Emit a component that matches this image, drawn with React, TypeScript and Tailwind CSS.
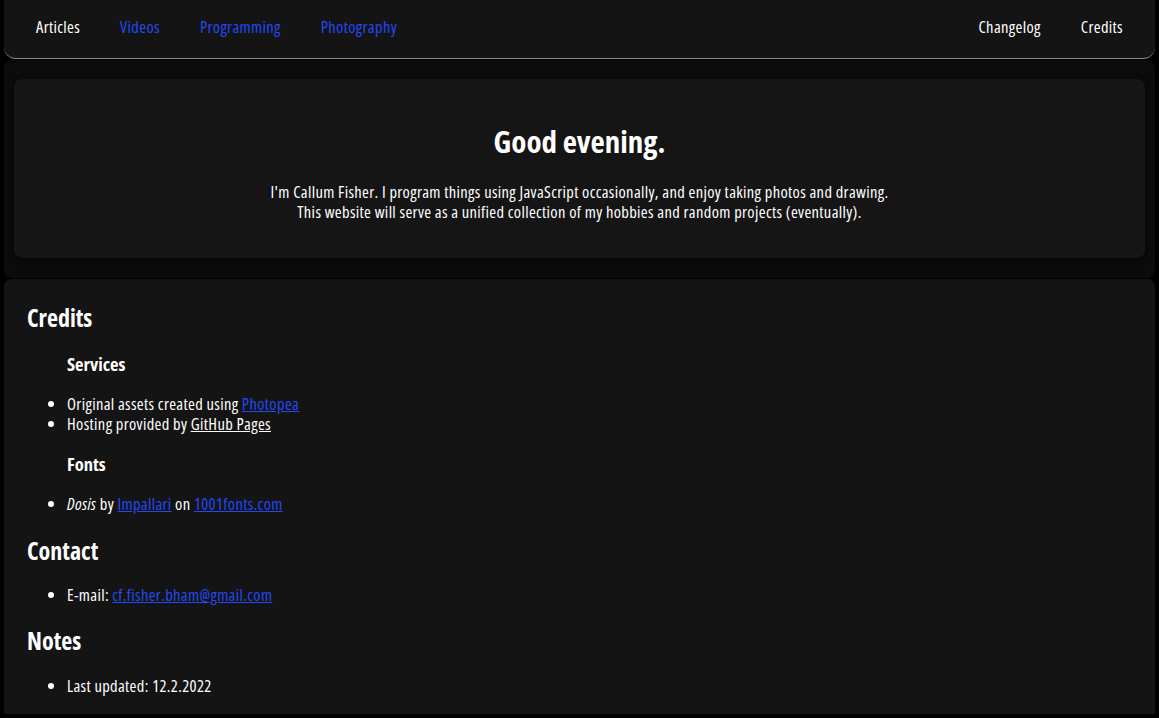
import React from "react";

const font = "font-['Open_Sans','Noto_Sans',sans-serif] [font-stretch:75%]";
const link = "text-[#2249f5] underline";
const body = "text-[16.5px] tracking-[0.35px]";

export default function App() {
  return (
    <div className={`min-h-screen bg-black px-1 text-white ${font}`}>
      <nav className={`flex h-[59px] items-center justify-between rounded-b-xl border-b border-[#8c8c8c] bg-[#141414] px-3 pb-[3px] ${body}`}>
        <div className="flex">
          <a className="px-5 text-white">Articles</a>
          <a className="px-5 text-[#2249f5]">Videos</a>
          <a className="px-5 text-[#2249f5]">Programming</a>
          <a className="px-5 text-[#2249f5]">Photography</a>
        </div>
        <div className="flex">
          <a className="px-5 text-white">Changelog</a>
          <a className="px-5 text-white">Credits</a>
        </div>
      </nav>
      <section className="mt-px rounded-lg bg-[#0b0b0b] px-[10px] pb-[20px] pt-[19px]">
        <div className="flex h-[179px] flex-col items-center rounded-lg bg-[#151515] pt-[42px] text-center shadow-[0_2px_6px_rgba(0,0,0,0.5)]">
          <h1 className="text-[31px] font-bold leading-[40px]">Good evening.</h1>
          <p className={`mt-[21px] leading-[20px] ${body}`}>
            I'm Callum Fisher. I program things using JavaScript occasionally, and enjoy taking photos and drawing.
            <br />
            This website will serve as a unified collection of my hobbies and random projects (eventually).
          </p>
        </div>
      </section>
      <main className={`mt-px rounded-t-lg bg-[#141414] px-[23px] pb-[18px] pt-[25px] leading-[20px] ${body}`}>
        <h2 className="text-[24px] font-bold leading-[28px] tracking-normal">Credits</h2>
        <h3 className="mt-[21px] pl-10 text-[18.5px] font-bold leading-[22px] tracking-normal">Services</h3>
        <ul className="mt-[19px] list-disc pl-10">
          <li>
            Original assets created using <a className={link}>Photopea</a>
          </li>
          <li>
            Hosting provided by <a className="text-white underline">GitHub Pages</a>
          </li>
        </ul>
        <h3 className="mt-[19px] pl-10 text-[18.5px] font-bold leading-[22px] tracking-normal">Fonts</h3>
        <ul className="mt-[19px] list-disc pl-10">
          <li>
            <i>Dosis</i> by <a className={link}>Impallari</a> on <a className={link}>1001fonts.com</a>
          </li>
        </ul>
        <h2 className="mt-[23px] text-[24px] font-bold leading-[28px] tracking-normal">Contact</h2>
        <ul className="mt-[20px] list-disc pl-10">
          <li>
            E-mail: <a className={link}>cf.fisher.bham@gmail.com</a>
          </li>
        </ul>
        <h2 className="mt-[22px] text-[24px] font-bold leading-[28px] tracking-normal">Notes</h2>
        <ul className="mt-[21px] list-disc pl-10">
          <li>Last updated: 12.2.2022</li>
        </ul>
      </main>
    </div>
  );
}
